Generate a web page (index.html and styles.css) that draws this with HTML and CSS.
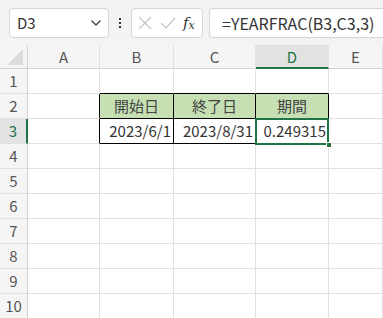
FILE: index.html
```html
<html>
<head>
  <title>YEARFRAC</title>
  <link rel="stylesheet" href="styles.css">
</head>
<body>
  <div class="toolbar">
    <div class="namebox">
      <span>D3</span>
      <svg class="chev" width="12" height="8" viewBox="0 0 12 8"><path d="M1.5 1.5 L6 6 L10.5 1.5" fill="none" stroke="#444" stroke-width="1.4"/></svg>
    </div>
    <div class="dots"><i></i><i></i><i></i></div>
    <div class="fxbox">
      <svg width="14" height="14" viewBox="0 0 14 14"><path d="M1 1 L13 13 M13 1 L1 13" stroke="#c4c4c4" stroke-width="1.2"/></svg>
      <svg width="16" height="14" viewBox="0 0 16 14"><path d="M1 7 L6 12 L15 2" fill="none" stroke="#c4c4c4" stroke-width="1.2"/></svg>
      <span class="fx">f<sub>x</sub></span>
    </div>
    <div class="formula">=YEARFRAC(B3,C3,3)</div>
  </div>

  <div class="sheet">
    <div class="corner"><span class="tri"></span></div>
    <div class="colhead">A</div>
    <div class="colhead">B</div>
    <div class="colhead">C</div>
    <div class="colhead active">D</div>
    <div class="colhead">E</div>

    <div class="rowhead">1</div>
    <div class="cell"></div>
    <div class="cell top"></div>
    <div class="cell top"></div>
    <div class="cell top"></div>
    <div class="cell"></div>

    <div class="rowhead">2</div>
    <div class="cell left"></div>
    <div class="cell th">開始日</div>
    <div class="cell th">終了日</div>
    <div class="cell th">期間</div>
    <div class="cell"></div>

    <div class="rowhead active">3</div>
    <div class="cell left"></div>
    <div class="cell td">2023/6/1</div>
    <div class="cell td">2023/8/31</div>
    <div class="cell td selected">0.249315<span class="handle"></span></div>
    <div class="cell"></div>

    <div class="rowhead">4</div>
    <div class="cell"></div><div class="cell"></div><div class="cell"></div><div class="cell"></div><div class="cell"></div>
    <div class="rowhead">5</div>
    <div class="cell"></div><div class="cell"></div><div class="cell"></div><div class="cell"></div><div class="cell"></div>
    <div class="rowhead">6</div>
    <div class="cell"></div><div class="cell"></div><div class="cell"></div><div class="cell"></div><div class="cell"></div>
    <div class="rowhead">7</div>
    <div class="cell"></div><div class="cell"></div><div class="cell"></div><div class="cell"></div><div class="cell"></div>
    <div class="rowhead">8</div>
    <div class="cell"></div><div class="cell"></div><div class="cell"></div><div class="cell"></div><div class="cell"></div>
    <div class="rowhead">9</div>
    <div class="cell"></div><div class="cell"></div><div class="cell"></div><div class="cell"></div><div class="cell"></div>
    <div class="rowhead">10</div>
    <div class="cell"></div><div class="cell"></div><div class="cell"></div><div class="cell"></div><div class="cell"></div>
  </div>
</body>
</html>
```

FILE: styles.css
```css
* {
  box-sizing: border-box;
}

body {
  margin: 0;
  font-family: "Noto Sans CJK JP", "Noto Sans", sans-serif;
  background-color: #fff;
  overflow: hidden;
}

.toolbar {
  height: 45px;
  background-color: #f3f3f3;
  display: flex;
  align-items: center;
  padding: 0 0 0 9px;
}

.namebox {
  width: 100px;
  height: 30px;
  background-color: #fff;
  border: 1px solid #d6d6d6;
  border-radius: 4px;
  display: flex;
  align-items: center;
  justify-content: space-between;
  padding: 0 6px 0 7px;
  font-size: 15px;
  color: #333;
}

.dots {
  width: 22px;
  display: flex;
  flex-direction: column;
  align-items: center;
  gap: 2px;
}

.dots i {
  width: 2px;
  height: 2px;
  background-color: #333;
}

.fxbox {
  width: 72px;
  height: 30px;
  background-color: #fff;
  border: 1px solid #d6d6d6;
  border-radius: 4px;
  display: flex;
  align-items: center;
  gap: 8px;
  padding-left: 6px;
}

.fx {
  font-family: "DejaVu Serif", serif;
  font-style: italic;
  font-size: 15px;
  color: #333;
  margin-left: -1px;
}

.fx sub {
  font-size: 11px;
  vertical-align: -1px;
}

.formula {
  flex: 1;
  height: 30px;
  margin-left: 6px;
  background-color: #fff;
  border: 1px solid #d6d6d6;
  border-right: none;
  border-radius: 4px 0 0 4px;
  padding-left: 12px;
  font-size: 16px;
  line-height: 28px;
  color: #333;
}

.sheet {
  display: grid;
  grid-template-columns: 28px 72px 74px 82px 73px 1fr;
  grid-template-rows: 24px repeat(10, 25px);
  font-size: 15px;
}

.corner {
  background-color: #f5f5f5;
  border-right: 1px solid #d4d4d4;
  border-bottom: 1px solid #d4d4d4;
  position: relative;
}

.tri {
  position: absolute;
  right: 4px;
  bottom: 3px;
  width: 0;
  height: 0;
  border-left: 16px solid transparent;
  border-bottom: 16px solid #dcdcdc;
}

.colhead {
  background-color: #f5f5f5;
  border-right: 1px solid #e1e1e1;
  border-bottom: 1px solid #d4d4d4;
  text-align: center;
  line-height: 23px;
  color: #555;
}

.colhead.active {
  background-color: #e2e2e2;
  color: #217346;
  border-bottom: 2px solid #217346;
}

.rowhead {
  background-color: #f5f5f5;
  border-right: 1px solid #d4d4d4;
  border-bottom: 1px solid #e1e1e1;
  text-align: center;
  line-height: 24px;
  color: #555;
}

.rowhead.active {
  background-color: #e2e2e2;
  color: #217346;
  border-right: 2px solid #217346;
}

.cell {
  border-right: 1px solid #e1e1e1;
  border-bottom: 1px solid #e1e1e1;
  line-height: 24px;
  color: #333;
  white-space: nowrap;
}

.cell.top {
  border-bottom-color: #000;
}

.cell.left {
  border-right-color: #000;
}

.th {
  background-color: #c6e0b4;
  border-right-color: #000;
  border-bottom-color: #000;
  text-align: center;
  color: #444;
}

.td {
  border-right-color: #000;
  border-bottom-color: #000;
  text-align: right;
  padding-right: 2px;
}

.selected {
  position: relative;
}

.selected::after {
  content: "";
  position: absolute;
  left: -1px;
  top: -1px;
  right: -1px;
  bottom: -2px;
  border: 2px solid #217346;
}

.handle {
  position: absolute;
  right: -4px;
  bottom: -5px;
  width: 6px;
  height: 6px;
  background-color: #217346;
  border: 1px solid #fff;
  z-index: 1;
}
```
